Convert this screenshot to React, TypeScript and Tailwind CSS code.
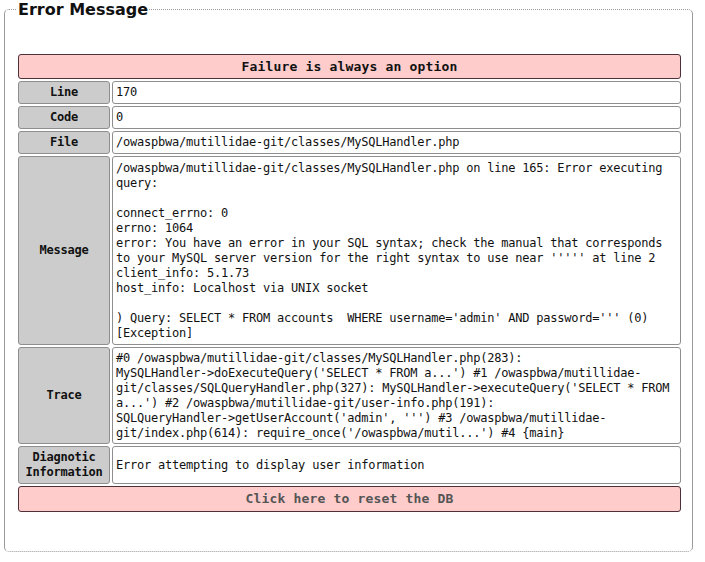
import React from "react";

const mono = { fontFamily: '"DejaVu Sans Mono", "Liberation Mono", monospace' };

const messageLines = [
  "/owaspbwa/mutillidae-git/classes/MySQLHandler.php on line 165: Error executing",
  "query:",
  "",
  "connect_errno: 0",
  "errno: 1064",
  "error: You have an error in your SQL syntax; check the manual that corresponds",
  "to your MySQL server version for the right syntax to use near ''''' at line 2",
  "client_info: 5.1.73",
  "host_info: Localhost via UNIX socket",
  "",
  ") Query: SELECT * FROM accounts  WHERE username='admin' AND password=''' (0)",
  "[Exception]",
];

const traceLines = [
  "#0 /owaspbwa/mutillidae-git/classes/MySQLHandler.php(283):",
  "MySQLHandler->doExecuteQuery('SELECT * FROM a...') #1 /owaspbwa/mutillidae-",
  "git/classes/SQLQueryHandler.php(327): MySQLHandler->executeQuery('SELECT * FROM",
  "a...') #2 /owaspbwa/mutillidae-git/user-info.php(191):",
  "SQLQueryHandler->getUserAccount('admin', ''') #3 /owaspbwa/mutillidae-",
  "git/index.php(614): require_once('/owaspbwa/mutil...') #4 {main}",
];

function Label({ children }: { children: React.ReactNode }) {
  return (
    <div className="flex items-center justify-center rounded-[3px] border border-[#8e8e8e] bg-[#cccccc] px-[2px] text-center text-[12px] font-bold leading-[15px] tracking-[-0.22px] text-[#111]">
      <div>{children}</div>
    </div>
  );
}

function Value({ children }: { children: React.ReactNode }) {
  return (
    <div className="flex min-w-0 items-center overflow-hidden rounded-[3px] border border-[#8e8e8e] bg-white px-[3px] text-[12px] leading-[15px] tracking-[-0.22px] text-[#111] whitespace-pre">
      <div>{children}</div>
    </div>
  );
}

export default function App() {
  return (
    <div className="min-h-[562px] bg-white">
      <fieldset className="ml-[4px] w-[689px] rounded-[5px] border border-dotted border-[#9a9a9a] [border-left-style:solid] [border-right-style:solid] pl-[13px] pr-[11px] pb-[39px]">
        <legend
          className="-ml-[1px] px-[1px] text-[16px] font-bold leading-[19px] text-[#111]"
          style={{ fontFamily: '"DejaVu Sans", "Liberation Sans", sans-serif' }}
        >
          Error Message
        </legend>
        <div className="pt-[35px]" style={mono}>
          <div className="grid grid-cols-[92px_minmax(0,1fr)] grid-rows-[25px_23px_23px_23px_189px_97px_38px_26px] gap-[2px]">
            <div className="col-span-2 flex items-center justify-center rounded-[3px] border border-[#4e3038] bg-[#ffcccc] text-[13px] font-bold leading-[17px] tracking-[0.17px] text-[#111]">
              Failure is always an option
            </div>
            <Label>Line</Label>
            <Value>170</Value>
            <Label>Code</Label>
            <Value>0</Value>
            <Label>File</Label>
            <Value>/owaspbwa/mutillidae-git/classes/MySQLHandler.php</Value>
            <Label>Message</Label>
            <Value>{messageLines.join("\n")}</Value>
            <Label>Trace</Label>
            <Value>{traceLines.join("\n")}</Value>
            <Label>
              Diagnotic
              <br />
              Information
            </Label>
            <Value>Error attempting to display user information</Value>
            <div className="col-span-2 flex items-center justify-center rounded-[3px] border border-[#4e3038] bg-[#ffcccc] text-[13px] font-bold leading-[16px] tracking-[0.17px] text-[#555]">
              Click here to reset the DB
            </div>
          </div>
        </div>
      </fieldset>
    </div>
  );
}
